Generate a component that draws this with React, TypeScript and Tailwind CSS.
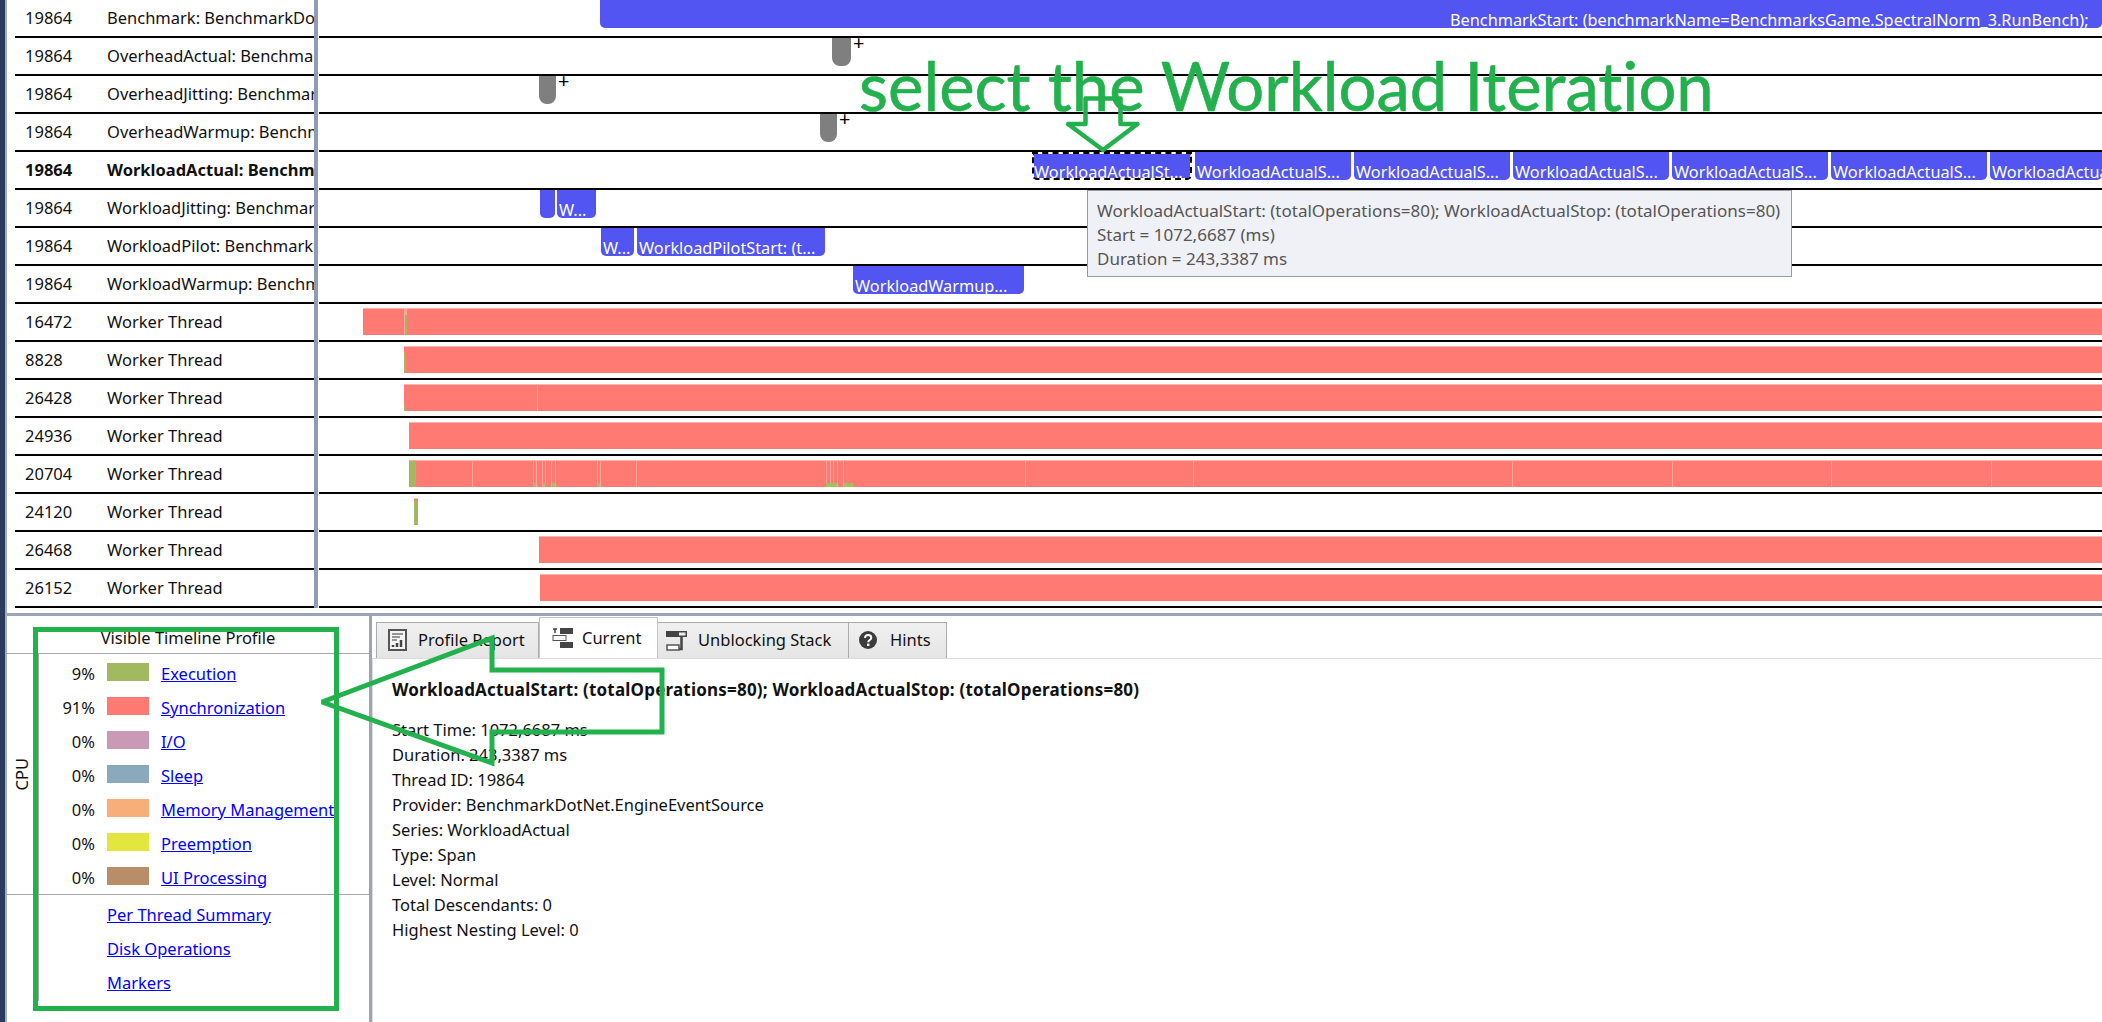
const TRACK_X = 319;

type Bar = { x: number; end?: number; label?: string; grey?: boolean; selected?: boolean; plus?: boolean };
type Mark = { x: number; w: number; h?: number; color: string };
type Row = { id: string; name: string; bold?: boolean; bars?: Bar[]; worker?: { x: number; end?: number; marks?: Mark[] } };

const PALE = "#ffa39d";
const GREEN = "#a2b861";

const pale = (x: number): Mark => ({ x, w: 1, color: PALE });
const tick = (x: number, w: number, h = 4): Mark => ({ x, w, h, color: "#9fc25f" });

const rows: Row[] = [
  {
    id: "19864",
    name: "Benchmark: BenchmarkDotNet.EngineEventSource",
    bars: [{ x: 600, label: "" }],
  },
  { id: "19864", name: "OverheadActual: BenchmarkDotNet.EngineEventSource", bars: [{ x: 832, end: 851, grey: true, plus: true }] },
  { id: "19864", name: "OverheadJitting: BenchmarkDotNet.EngineEventSource", bars: [{ x: 539, end: 556, grey: true, plus: true }] },
  { id: "19864", name: "OverheadWarmup: BenchmarkDotNet.EngineEventSource", bars: [{ x: 820, end: 837, grey: true, plus: true }] },
  {
    id: "19864",
    name: "WorkloadActual: BenchmarkDotNet.EngineEventSource",
    bold: true,
    bars: [
      { x: 1032, end: 1192, label: "WorkloadActualSt...", selected: true },
      { x: 1195, end: 1351, label: "WorkloadActualS..." },
      { x: 1354, end: 1510, label: "WorkloadActualS..." },
      { x: 1513, end: 1669, label: "WorkloadActualS..." },
      { x: 1672, end: 1828, label: "WorkloadActualS..." },
      { x: 1831, end: 1987, label: "WorkloadActualS..." },
      { x: 1990, label: "WorkloadActualStart" },
    ],
  },
  {
    id: "19864",
    name: "WorkloadJitting: BenchmarkDotNet.EngineEventSource",
    bars: [
      { x: 540, end: 555 },
      { x: 557, end: 596, label: "W..." },
    ],
  },
  {
    id: "19864",
    name: "WorkloadPilot: BenchmarkDotNet.EngineEventSource",
    bars: [
      { x: 601, end: 634, label: "W..." },
      { x: 637, end: 825, label: "WorkloadPilotStart: (t..." },
    ],
  },
  { id: "19864", name: "WorkloadWarmup: BenchmarkDotNet.EngineEventSource", bars: [{ x: 853, end: 1024, label: "WorkloadWarmup..." }] },
  { id: "16472", name: "Worker Thread", worker: { x: 363, marks: [{ x: 404, w: 3, color: PALE }, { x: 405, w: 2, h: 20, color: GREEN }] } },
  { id: "8828", name: "Worker Thread", worker: { x: 404, marks: [{ x: 404, w: 2, h: 20, color: GREEN }] } },
  { id: "26428", name: "Worker Thread", worker: { x: 404, marks: [{ x: 404, w: 2, h: 6, color: GREEN }, pale(537)] } },
  { id: "24936", name: "Worker Thread", worker: { x: 409 } },
  {
    id: "20704",
    name: "Worker Thread",
    worker: {
      x: 409,
      marks: [
        { x: 410, w: 6, color: GREEN },
        pale(472), pale(533), pale(536), pale(542), pale(545), pale(551), pale(555), pale(597), pale(600), pale(636),
        pale(826), pale(830), pale(833), pale(837), pale(843), pale(1025), pale(1193), pale(1512), pale(1672), pale(1831), pale(1991),
        tick(533, 3), tick(543, 3), tick(552, 3), tick(597, 3), tick(826, 11), tick(844, 9),
      ],
    },
  },
  {
    id: "24120",
    name: "Worker Thread",
    worker: { x: 414, end: 418, marks: [{ x: 414, w: 4, h: 24, color: GREEN }] },
  },
  { id: "26468", name: "Worker Thread", worker: { x: 539 } },
  { id: "26152", name: "Worker Thread", worker: { x: 540 } },
];

const legend = [
  { pct: "9%", color: "bg-[#a2b861]", label: "Execution" },
  { pct: "91%", color: "bg-[#ff7a72]", label: "Synchronization" },
  { pct: "0%", color: "bg-[#c99ab5]", label: "I/O" },
  { pct: "0%", color: "bg-[#8aa9bd]", label: "Sleep" },
  { pct: "0%", color: "bg-[#f7ae78]", label: "Memory Management" },
  { pct: "0%", color: "bg-[#e3e63e]", label: "Preemption" },
  { pct: "0%", color: "bg-[#b88d68]", label: "UI Processing" },
];

const details = [
  "Start Time: 1072,6687 ms",
  "Duration: 243,3387 ms",
  "Thread ID: 19864",
  "Provider: BenchmarkDotNet.EngineEventSource",
  "Series: WorkloadActual",
  "Type: Span",
  "Level: Normal",
  "Total Descendants: 0",
  "Highest Nesting Level: 0",
];

function TimelineBar({ bar }: { bar: Bar }) {
  const width = bar.end ? bar.end - bar.x : 2102 - bar.x;
  if (bar.grey) {
    return (
      <>
        <div
          className="absolute top-0 h-[28px] rounded-b-[8px] bg-[#7f7f7f]"
          style={{ left: bar.x - TRACK_X, width }}
        />
        <span
          className="absolute top-[-5px] text-[20px] leading-[20px] text-black"
          style={{ left: bar.end! - TRACK_X + 2 }}
        >
          +
        </span>
      </>
    );
  }
  return (
    <div
      className={`absolute top-0 h-[28px] overflow-hidden rounded-b-[5px] bg-[#5255f1] bg-clip-padding text-[16.3px] leading-[24px] whitespace-nowrap text-white ${
        bar.selected ? "border-2 border-dashed border-black pt-[6px]" : "pt-[8px] pl-[2px]"
      }`}
      style={{ left: bar.x - TRACK_X, width }}
    >
      {bar.label}
    </div>
  );
}

function WorkerBar({ worker }: { worker: NonNullable<Row["worker"]> }) {
  const width = (worker.end ?? 2102) - worker.x;
  return (
    <div
      className="absolute top-[4px] h-[27px] overflow-hidden border-t border-[#ffb4ae] bg-[#ff7a72]"
      style={{ left: worker.x - TRACK_X, width }}
    >
      {worker.marks?.map((m, i) => (
        <div
          key={i}
          className="absolute bottom-0"
          style={{ left: m.x - worker.x, width: m.w, height: m.h ?? 27, backgroundColor: m.color }}
        />
      ))}
    </div>
  );
}

function TimelineRow({ row }: { row: Row }) {
  return (
    <div className="flex h-[38px]">
      <div
        className={`ml-[8px] flex h-[38px] w-[299px] overflow-hidden border-b-2 border-black pl-[10px] leading-[36px] whitespace-nowrap text-[#111] ${
          row.bold ? "font-bold" : ""
        }`}
      >
        <span className="w-[82px] shrink-0">{row.id}</span>
        <span>{row.name}</span>
      </div>
      <div className="h-[38px] w-[4px] shrink-0 bg-[#8f9cb2]" />
      <div className="relative ml-[1px] h-[38px] flex-1 border-b-2 border-black">
        {row.bars?.map((bar) => (
          <TimelineBar key={bar.x} bar={bar} />
        ))}
        {row.worker && <WorkerBar worker={row.worker} />}
      </div>
    </div>
  );
}

function ReportIcon() {
  return (
    <svg width="19" height="22" viewBox="0 0 19 22">
      <rect x="1" y="1" width="17" height="20" fill="#f4f4f4" stroke="#555" strokeWidth="2" />
      <path d="M4 5h11M4 8h8M4 11h5" stroke="#777" strokeWidth="1.5" />
      <path d="M5 18v-2M9 18v-4M13 18v-7" stroke="#444" strokeWidth="2.5" />
    </svg>
  );
}

function CurrentIcon() {
  return (
    <svg width="21" height="22" viewBox="0 0 21 22">
      <rect x="8" y="1" width="13" height="6" fill="#444" />
      <rect x="1" y="8.5" width="13" height="5" fill="#fff" stroke="#555" />
      <rect x="8" y="15" width="13" height="6" fill="#444" />
      <path d="M1 2h4M3 2v4" stroke="#444" strokeWidth="1.5" />
    </svg>
  );
}

function UnblockingIcon() {
  return (
    <svg width="21" height="21" viewBox="0 0 21 21">
      <rect x="0" y="1" width="21" height="6" fill="#444" />
      <rect x="13" y="2.5" width="6.5" height="3" fill="#eee" />
      <path d="M15.5 7v12H13" fill="none" stroke="#444" strokeWidth="2.5" />
      <rect x="1" y="15" width="12" height="5" fill="#fff" stroke="#555" strokeWidth="1.5" />
    </svg>
  );
}

function HintsIcon() {
  return (
    <svg width="18" height="18" viewBox="0 0 18 18">
      <circle cx="9" cy="9" r="9" fill="#3c3c3c" />
      <path d="M6 7c0-2 1.400-3 3.100-3C11 4 12.300 5 12.300 6.700c0 2.300-3.100 2.400-3.100 4.500" fill="none" stroke="#fff" strokeWidth="2" />
      <rect x="8" y="12.600" width="2.400" height="2.400" fill="#fff" />
    </svg>
  );
}

function Tab({
  label,
  icon,
  width,
  gap,
  pad,
  active,
}: {
  label: string;
  icon: React.ReactNode;
  width: string;
  gap: string;
  pad: string;
  active?: boolean;
}) {
  return (
    <div
      className={`flex items-center whitespace-nowrap text-[#111] ${width} ${gap} ${pad} ${
        active
          ? "h-[41px] border-x border-t border-[#c4c4c4] bg-white"
          : "h-[36px] border-t border-r border-[#acacac] bg-gradient-to-b from-[#f0f0f0] to-[#e5e5e5] pb-[1px]"
      }`}
    >
      {icon}
      <span>{label}</span>
    </div>
  );
}

function Annotations() {
  return (
    <>
      <span className="absolute top-[45px] left-[859px] font-['Lato',sans-serif] text-[67px] leading-[80px] whitespace-nowrap text-[#22b14c] [-webkit-text-stroke:0.6px_#22b14c] [font-variant-ligatures:none]">
        select the Workload Iteration
      </span>
      <svg className="absolute top-0 left-0" width="2102" height="1022" viewBox="0 0 2102 1022">
        <path
          d="M1085.500 98.500H1120.500V124H1137.500L1103 150L1068 124H1085.500Z"
          fill="none"
          stroke="#22b14c"
          strokeWidth="4.500"
          strokeLinejoin="round"
        />
        <path
          d="M322 702L492 638V670H662V732H492V763Z"
          fill="none"
          stroke="#22b14c"
          strokeWidth="5"
          strokeLinejoin="miter"
          strokeMiterlimit="2"
        />
      </svg>
      <div className="absolute top-[627px] left-[33px] h-[384px] w-[306px] border-[5px] border-[#22b14c]" />
    </>
  );
}

export default function App() {
  return (
    <div className="relative flex h-[1022px] w-[2102px] overflow-hidden bg-white font-['Noto_Sans',sans-serif] text-[16.5px]">
      <div className="h-full w-[5px] shrink-0 bg-[#2b3b5c]" />
      <div className="h-full w-[2px] shrink-0 bg-[#a3adc7]" />

      <div className="flex min-w-0 flex-1 flex-col">
        {/* Timeline rows */}
        <div className="h-[608px]">
          {rows.map((row, i) => (
            <TimelineRow key={i} row={row} />
          ))}
        </div>

        <div className="mt-[5px] h-[3px] bg-[#9aa5b8]" />

        <div className="flex flex-1">
          {/* Visible timeline profile */}
          <div className="w-[362px] shrink-0 overflow-hidden">
            <div className="h-[38px] border-b border-[#a8a8a8] pt-[8px] text-center leading-[28px] text-[#111]">
              Visible Timeline Profile
            </div>
            <div className="flex h-[241px] border-b border-[#a8a8a8]">
              <div className="flex w-[32px] shrink-0 items-center justify-center border-r border-[#a8a8a8]">
                <span className="rotate-180 text-[#111] [writing-mode:vertical-rl]">CPU</span>
              </div>
              <div className="pt-[3px]">
                {legend.map((item) => (
                  <div key={item.label} className="flex h-[34px] items-center whitespace-nowrap">
                    <span className="w-[56px] text-right text-[#111]">{item.pct}</span>
                    <span className={`mt-[-4px] ml-[12px] h-[18px] w-[42px] shrink-0 ${item.color}`} />
                    <a className="ml-[12px] text-[#0000ff] underline">{item.label}</a>
                  </div>
                ))}
              </div>
            </div>
            <div className="flex h-[106px]">
              <div className="w-[32px] shrink-0 border-r border-[#a8a8a8]" />
              <div className="flex flex-col pt-[3px] pl-[68px]">
                {["Per Thread Summary", "Disk Operations", "Markers"].map((link) => (
                  <a key={link} className="h-[34px] leading-[34px] whitespace-nowrap text-[#0000ff] underline">
                    {link}
                  </a>
                ))}
              </div>
            </div>
          </div>

          <div className="h-full w-[3px] shrink-0 bg-[#9aa5b8]" />

          {/* Details tabs */}
          <div className="flex min-w-0 flex-1 flex-col pt-[1px]">
            <div className="flex h-[41px] items-end pl-[4px]">
              <div className="border-l border-[#acacac]">
                <Tab label="Profile Report" icon={<ReportIcon />} width="w-[162px]" gap="gap-[11px]" pad="pl-[11px]" />
              </div>
              <Tab label="Current" icon={<CurrentIcon />} width="w-[119px]" gap="gap-[9px]" pad="pl-[12px]" active />
              <Tab label="Unblocking Stack" icon={<UnblockingIcon />} width="w-[191px]" gap="gap-[11px]" pad="pl-[8px]" />
              <Tab label="Hints" icon={<HintsIcon />} width="w-[98px]" gap="gap-[13px]" pad="pl-[10px]" />
            </div>
            <div className="flex-1 border-t border-l border-[#dcdcdc] pt-[18px] pl-[19px] leading-[25px] text-[#111]">
              <div className="text-[17px] font-bold tracking-[0.2px] whitespace-nowrap">
                WorkloadActualStart: (totalOperations=80); WorkloadActualStop: (totalOperations=80)
              </div>
              <div className="mt-[15px]">
                {details.map((line) => (
                  <div key={line}>{line}</div>
                ))}
              </div>
            </div>
          </div>
        </div>
      </div>

      {/* Row 0 label sits to the right of the long bar */}
      <span className="absolute top-[9px] left-[1450px] text-[16.3px] leading-[22px] whitespace-nowrap text-white">
        BenchmarkStart: (benchmarkName=BenchmarksGame.SpectralNorm_3.RunBench);
      </span>

      <div className="absolute top-[190px] left-[1087px] flex h-[87px] w-[705px] flex-col justify-center border border-[#9a9a9a] bg-[#f0f1f6] pt-[2px] pl-[9px] text-[17px] leading-[24px] text-[#555]">
        <div>WorkloadActualStart: (totalOperations=80); WorkloadActualStop: (totalOperations=80)</div>
        <div>Start = 1072,6687 (ms)</div>
        <div>Duration = 243,3387 ms</div>
      </div>

      <Annotations />
    </div>
  );
}
